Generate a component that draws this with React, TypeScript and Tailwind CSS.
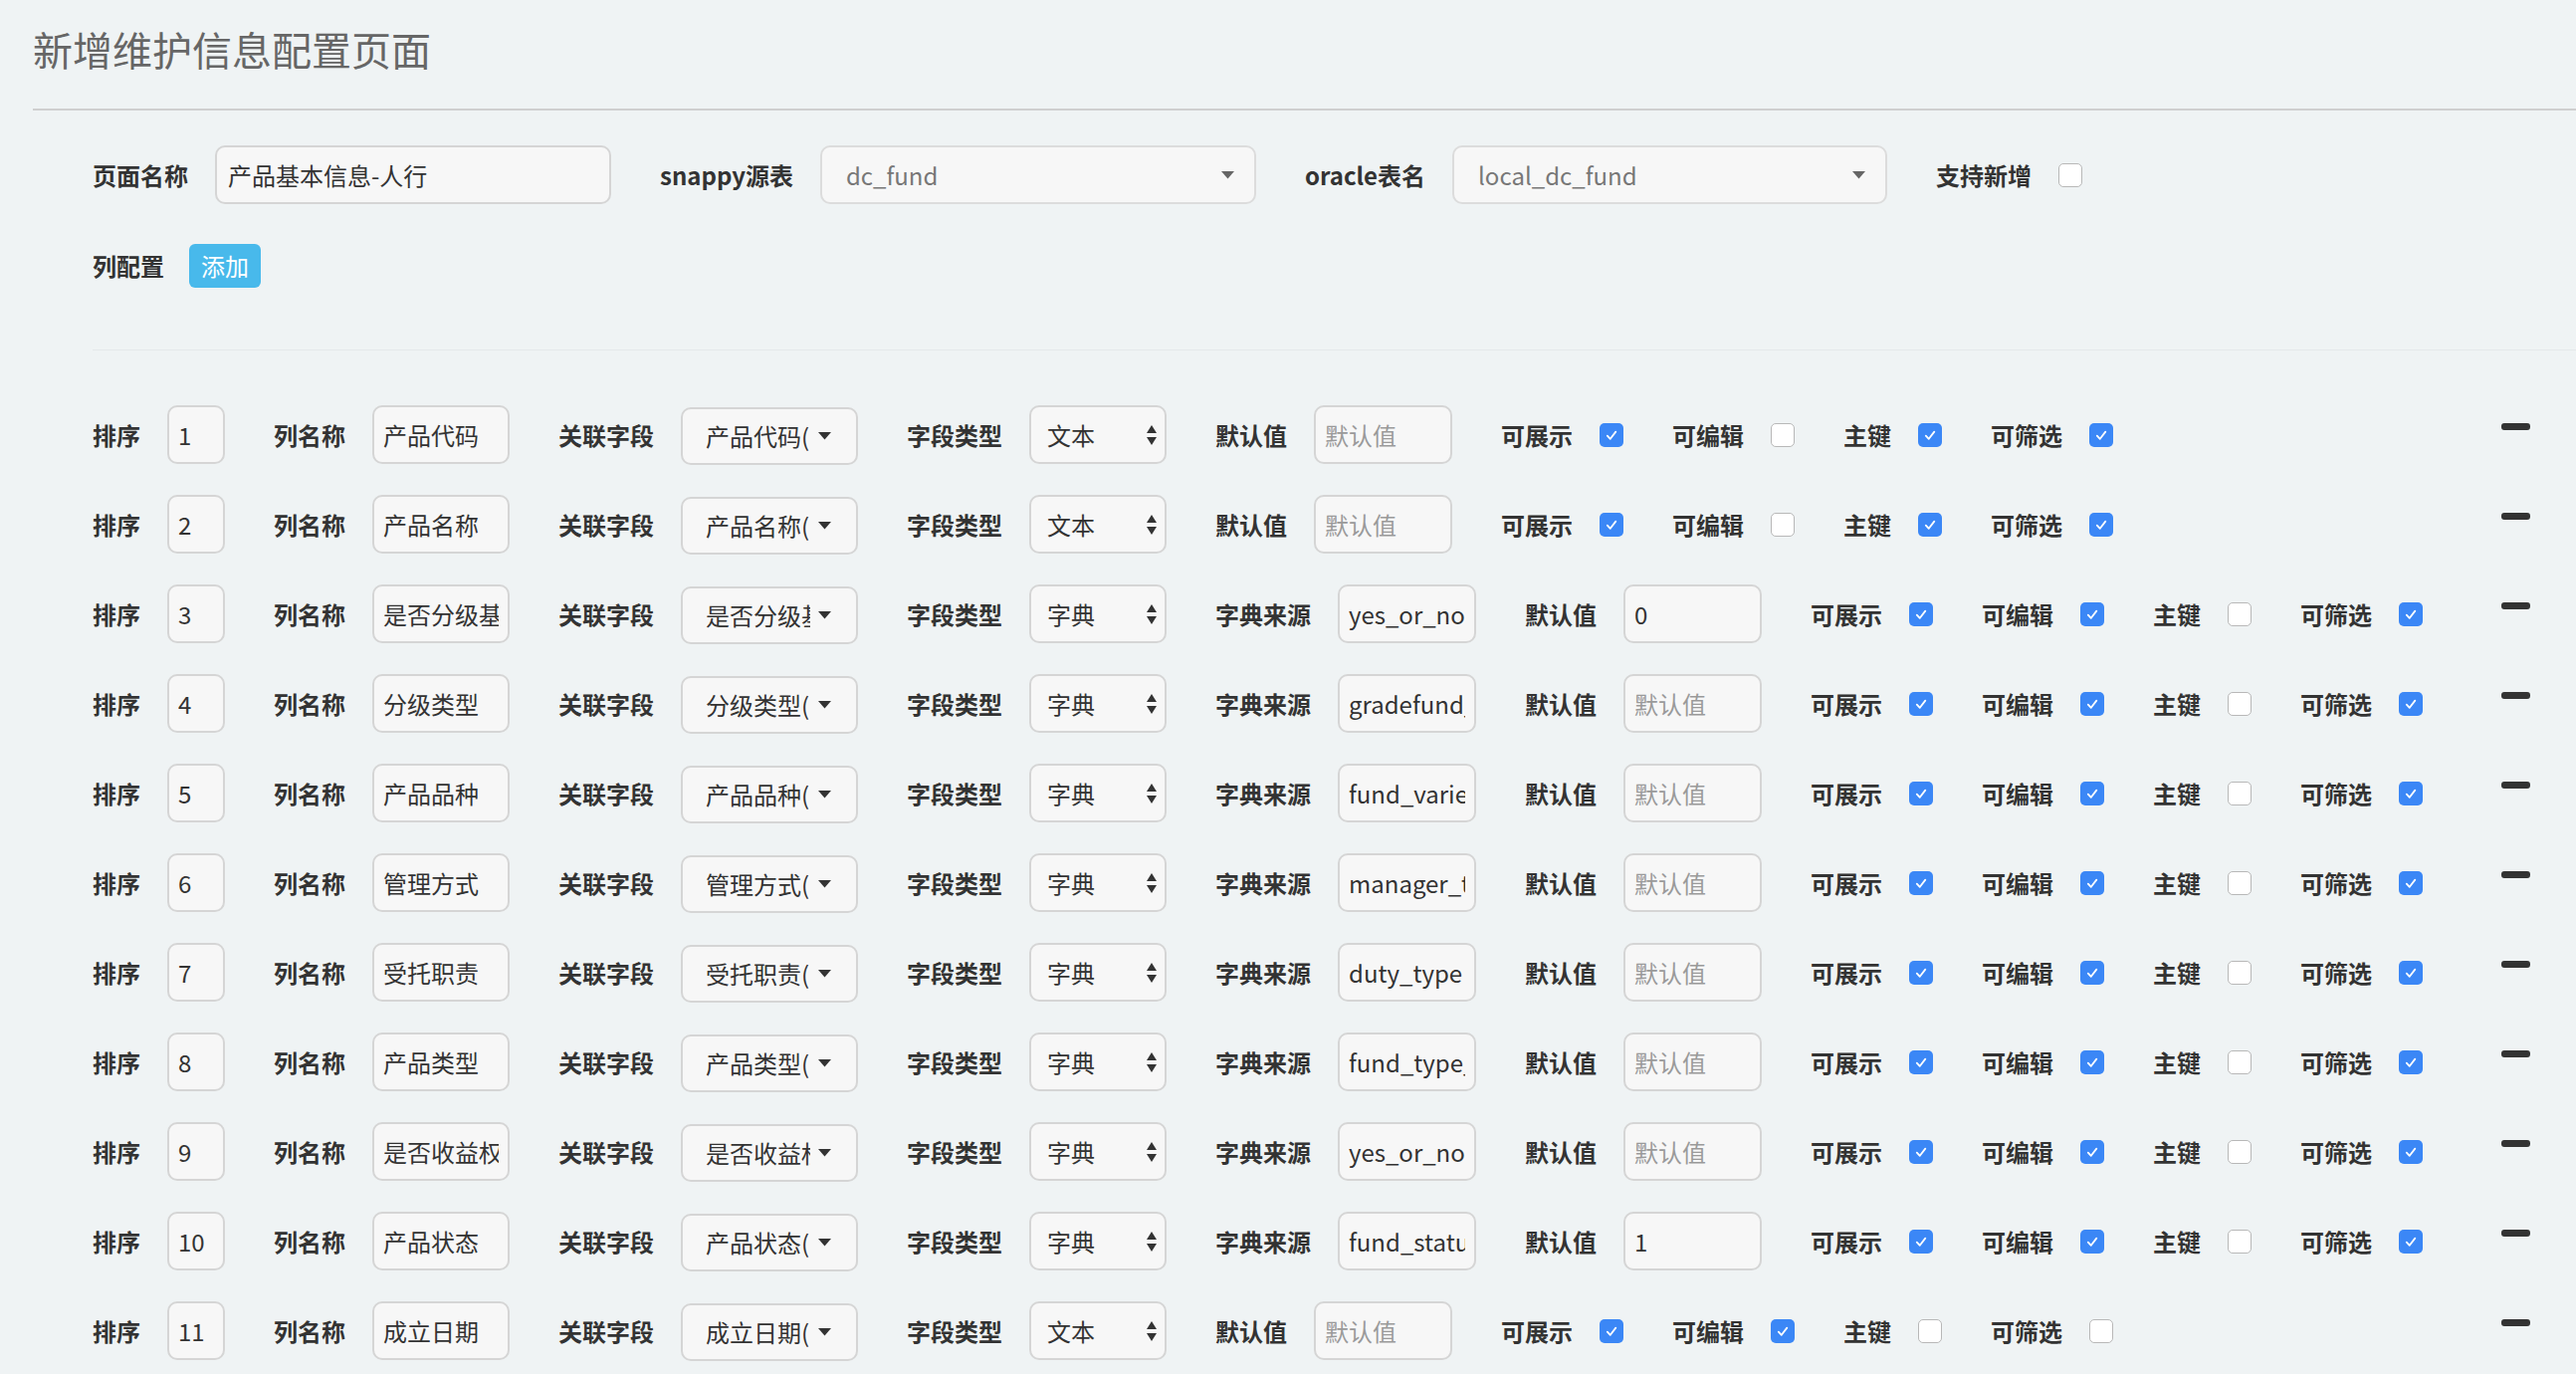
import React from "react";

type Row = {
  order: string;
  name: string;
  field: string;
  type: "文本" | "字典";
  dict?: string;
  def?: string;
  show: boolean;
  edit: boolean;
  pk: boolean;
  filter: boolean;
};

const rows: Row[] = [
  { order: "1", name: "产品代码", field: "产品代码(", type: "文本", show: true, edit: false, pk: true, filter: true },
  { order: "2", name: "产品名称", field: "产品名称(", type: "文本", show: true, edit: false, pk: true, filter: true },
  { order: "3", name: "是否分级基", field: "是否分级基", type: "字典", dict: "yes_or_no", def: "0", show: true, edit: true, pk: false, filter: true },
  { order: "4", name: "分级类型", field: "分级类型(", type: "字典", dict: "gradefund_", show: true, edit: true, pk: false, filter: true },
  { order: "5", name: "产品品种", field: "产品品种(", type: "字典", dict: "fund_variet", show: true, edit: true, pk: false, filter: true },
  { order: "6", name: "管理方式", field: "管理方式(", type: "字典", dict: "manager_ty", show: true, edit: true, pk: false, filter: true },
  { order: "7", name: "受托职责", field: "受托职责(", type: "字典", dict: "duty_type", show: true, edit: true, pk: false, filter: true },
  { order: "8", name: "产品类型", field: "产品类型(", type: "字典", dict: "fund_type_", show: true, edit: true, pk: false, filter: true },
  { order: "9", name: "是否收益权", field: "是否收益权", type: "字典", dict: "yes_or_no", show: true, edit: true, pk: false, filter: true },
  { order: "10", name: "产品状态", field: "产品状态(", type: "字典", dict: "fund_status", def: "1", show: true, edit: true, pk: false, filter: true },
  { order: "11", name: "成立日期", field: "成立日期(", type: "文本", show: true, edit: true, pk: false, filter: false },
];

const inputCls =
  "h-[59px] rounded-[10px] border-2 border-[#d5d5d5] bg-[#f7f7f7] px-[9px] text-[24px] text-[#333] placeholder:text-[#9a9a9a] outline-none";

const Label = ({ children }: { children: React.ReactNode }) => (
  <span className="whitespace-nowrap text-[24px] font-bold text-[#333]">{children}</span>
);

const Field = ({ label, children }: { label: string; children: React.ReactNode }) => (
  <div className="flex items-center gap-[27px]">
    <Label>{label}</Label>
    {children}
  </div>
);

const Check = ({ on }: { on: boolean }) =>
  on ? (
    <div className="flex h-[24px] w-[24px] items-center justify-center rounded-[5px] bg-[#3b87f6]">
      <svg width="16" height="16" viewBox="0 0 16 16">
        <path d="M3.8 8.6 L6.8 11.8 L12.3 4.6" fill="none" stroke="#fff" strokeWidth="1.8" strokeLinecap="round" strokeLinejoin="round" />
      </svg>
    </div>
  ) : (
    <div className="h-[24px] w-[24px] rounded-[5px] border-[1.5px] border-[#b8b8b8] bg-white" />
  );

const Caret = ({ color = "#333" }: { color?: string }) => (
  <svg width="13" height="8" viewBox="0 0 13 8">
    <path d="M0 0 H13 L6.5 7.5 Z" fill={color} />
  </svg>
);

const UpDown = () => (
  <svg width="10" height="22" viewBox="0 0 10 22">
    <path d="M0 9 L5 1 L10 9 Z" fill="#333" />
    <path d="M0 13 L10 13 L5 21 Z" fill="#333" />
  </svg>
);

const ConfigRow = ({ r }: { r: Row }) => (
  <div className="flex h-[59px] items-center gap-[49px]">
    <Field label="排序">
      <input readOnly value={r.order} className={`${inputCls} w-[58px]`} />
    </Field>
    <Field label="列名称">
      <input readOnly value={r.name} className={`${inputCls} w-[138px]`} />
    </Field>
    <Field label="关联字段">
      <div className="mt-[3px] flex h-[58px] w-[178px] items-center rounded-[10px] border-2 border-[#d5d5d5] bg-[#f7f7f7] pl-[23px] pr-[25px]">
        <span className="w-[105px] overflow-hidden whitespace-nowrap text-[24px] text-[#333]">{r.field}</span>
        <span className="ml-auto flex">
          <Caret />
        </span>
      </div>
    </Field>
    <Field label="字段类型">
      <div className="flex h-[59px] w-[138px] items-center rounded-[10px] border-2 border-[#d5d5d5] bg-[#f7f7f7] pl-[16px] pr-[8px]">
        <span className="text-[24px] text-[#333]">{r.type}</span>
        <span className="ml-auto flex">
          <UpDown />
        </span>
      </div>
    </Field>
    {r.type === "字典" && (
      <Field label="字典来源">
        <input readOnly value={r.dict} className={`${inputCls} w-[139px]`} />
      </Field>
    )}
    <Field label="默认值">
      <input readOnly value={r.def ?? ""} placeholder="默认值" className={`${inputCls} w-[139px]`} />
    </Field>
    <Field label="可展示">
      <Check on={r.show} />
    </Field>
    <Field label="可编辑">
      <Check on={r.edit} />
    </Field>
    <Field label="主键">
      <Check on={r.pk} />
    </Field>
    <Field label="可筛选">
      <Check on={r.filter} />
    </Field>
    <div className="mt-[-16px] ml-auto h-[7px] w-[29px] rounded-[3px] bg-[#333]" />
  </div>
);

export default function App() {
  return (
    <div
      className="min-h-screen bg-[#eff3f4] pb-[40px] pl-[33px]"
      style={{ fontFamily: '"Noto Sans CJK SC", "Noto Sans", sans-serif' }}
    >
      <h1 className="pt-[29px] text-[40px] leading-[40px] font-normal text-[#666]">新增维护信息配置页面</h1>
      <div className="mt-[40px] h-[2px] bg-[#cfcfcf]" />

      <div className="pl-[60px] pr-[46px]">
        <div className="mt-[35px] flex h-[59px] items-center gap-[49px]">
          <Field label="页面名称">
            <input readOnly value="产品基本信息-人行" className={`${inputCls} h-[58px] w-[398px] px-[11px]`} />
          </Field>
          <Field label="snappy源表">
            <div className="flex h-[59px] w-[438px] items-center rounded-[10px] border-2 border-[#dcdcdc] bg-[#f7f7f7] pl-[24px] pr-[20px]">
              <span className="text-[24px] text-[#777]">dc_fund</span>
              <span className="ml-auto flex">
                <Caret color="#666" />
              </span>
            </div>
          </Field>
          <Field label="oracle表名">
            <div className="flex h-[59px] w-[437px] items-center rounded-[10px] border-2 border-[#dcdcdc] bg-[#f7f7f7] pl-[24px] pr-[20px]">
              <span className="text-[24px] text-[#777]">local_dc_fund</span>
              <span className="ml-auto flex">
                <Caret color="#666" />
              </span>
            </div>
          </Field>
          <Field label="支持新增">
            <Check on={false} />
          </Field>
        </div>

        <div className="mt-[32px] flex h-[59px] items-center gap-[25px]">
          <Label>列配置</Label>
          <button className="flex h-[44px] w-[72px] items-center justify-center rounded-[6px] bg-[#48b9eb] text-[24px] text-white">
            添加
          </button>
        </div>

        <div className="mt-[55px] -mr-[46px] h-px bg-[#e4e8ea]" />

        <div className="mt-[55px] flex flex-col gap-[31px]">
          {rows.map((r) => (
            <ConfigRow key={r.order} r={r} />
          ))}
        </div>
      </div>
    </div>
  );
}
